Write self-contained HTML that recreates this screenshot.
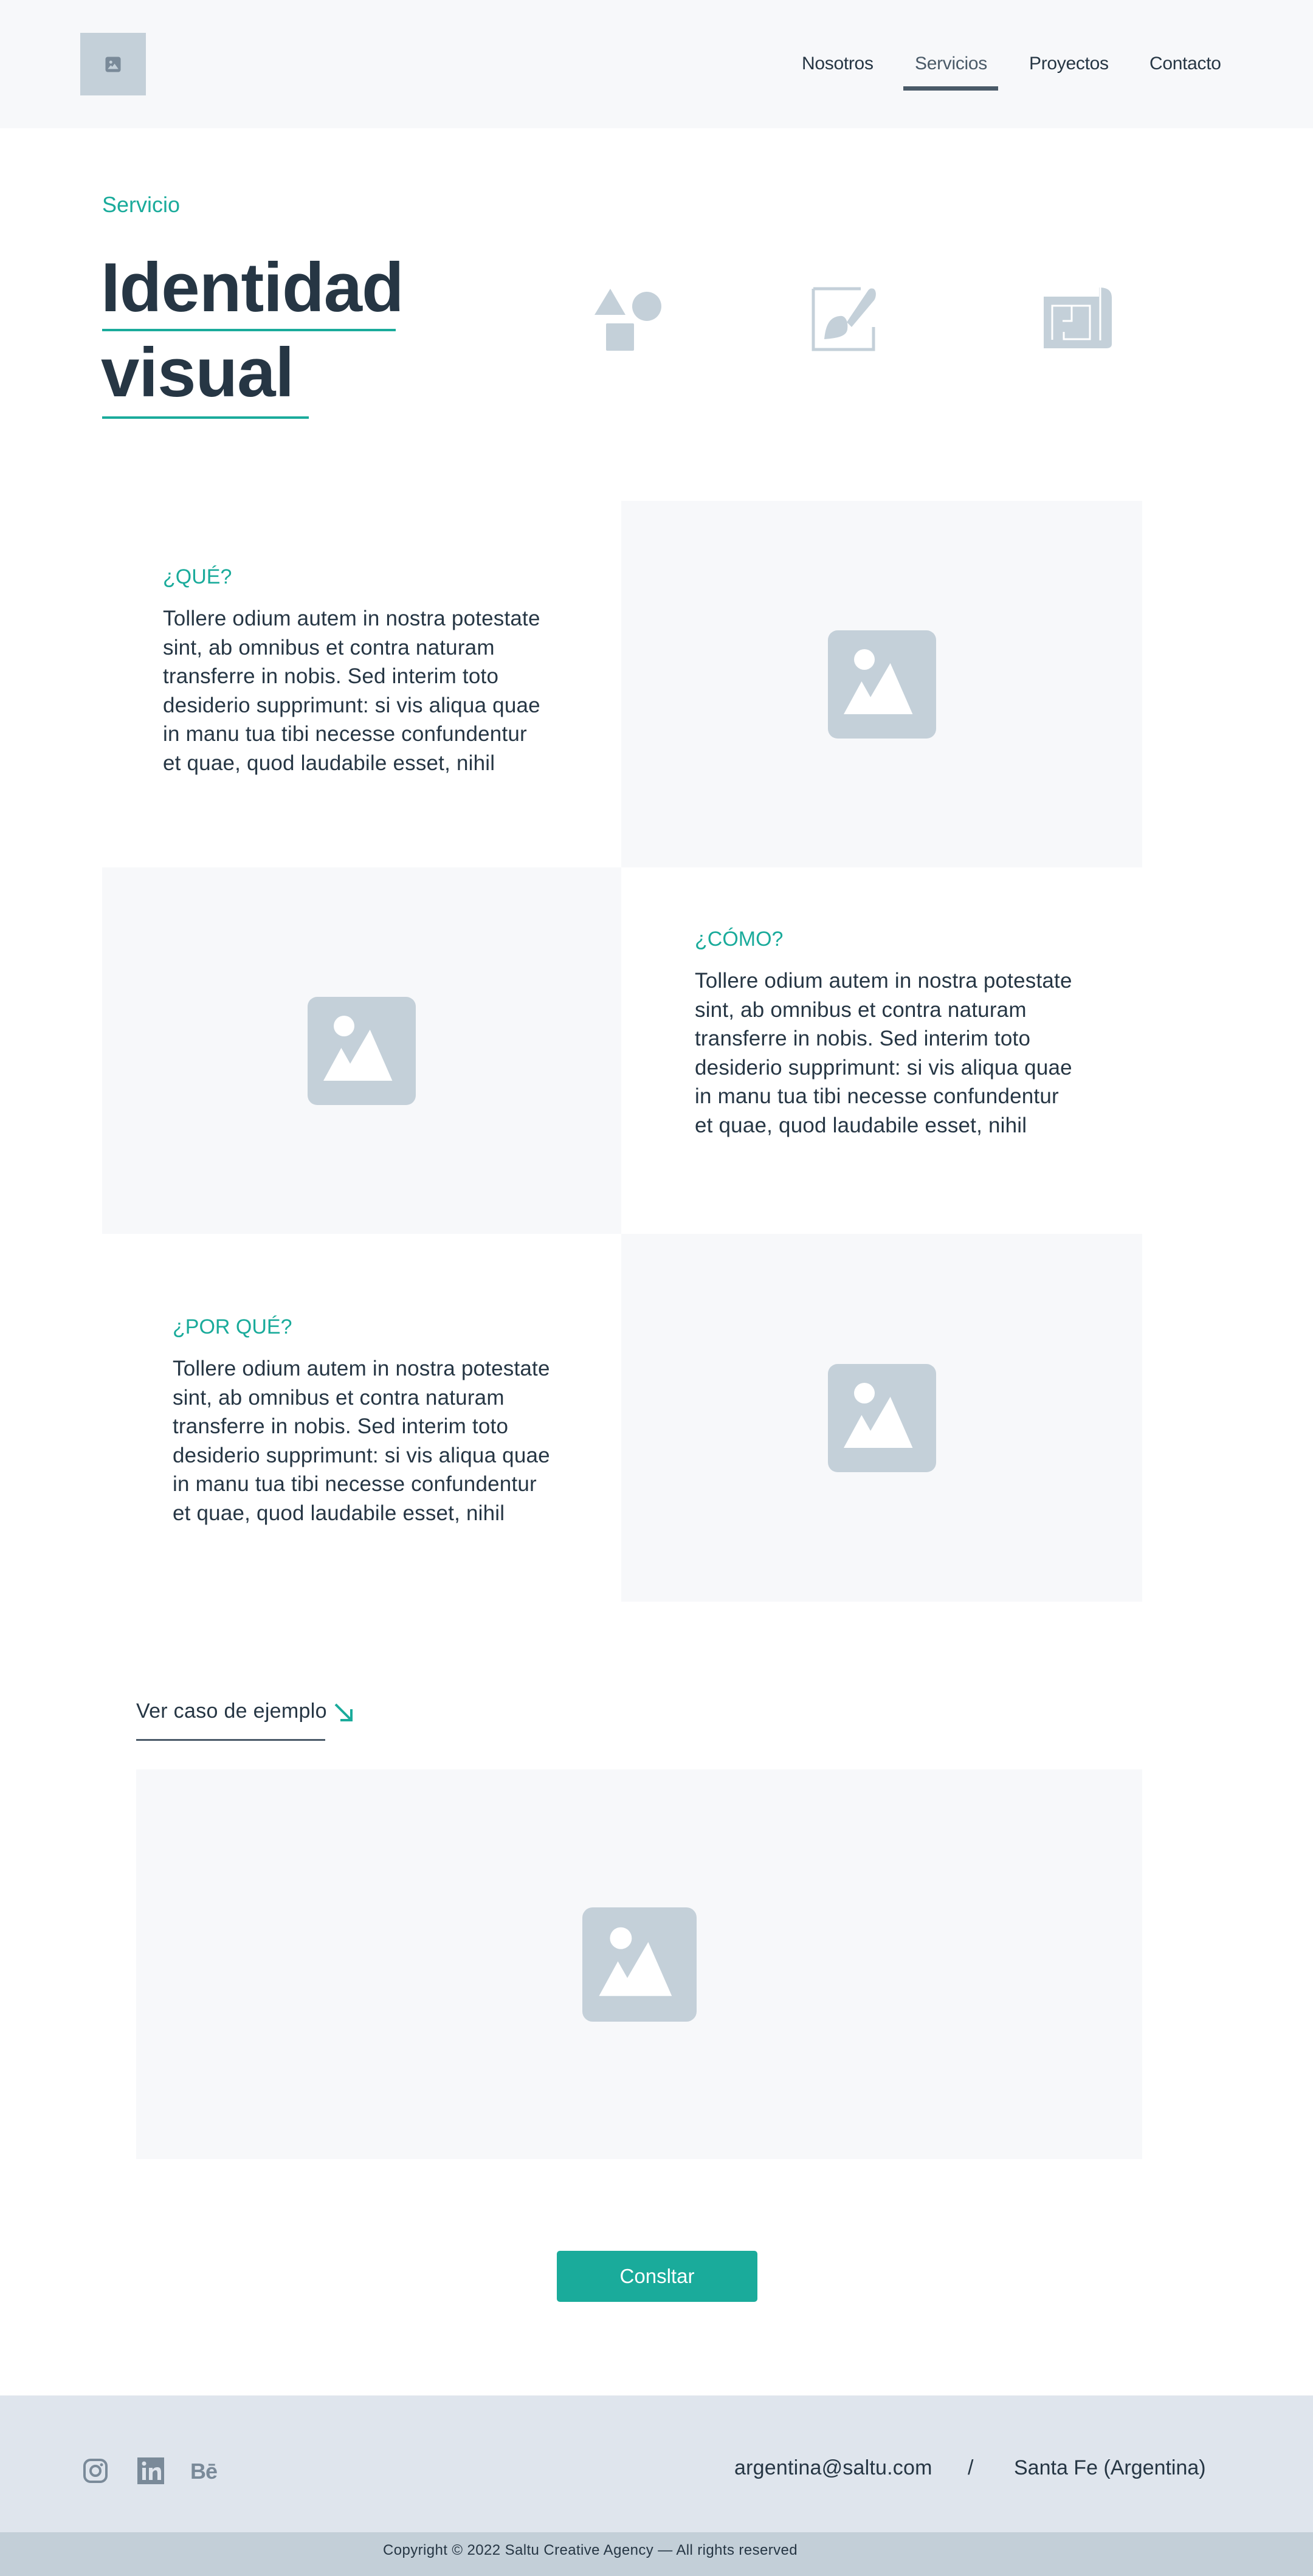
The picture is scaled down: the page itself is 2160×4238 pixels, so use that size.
<!DOCTYPE html>
<html><head><meta charset="utf-8"><style>
*{margin:0;padding:0;box-sizing:border-box}
body{width:2160px;height:4238px;position:relative;background:#fff;font-family:"Liberation Sans",sans-serif;color:#263644;overflow:hidden}
.a{position:absolute}
.nav{font-size:30px;top:88px;letter-spacing:-0.3px;color:#263644}
.ph{background:#f7f8fa;position:absolute;display:flex;align-items:center;justify-content:center}
.h{color:#1aab9b;font-size:34px;letter-spacing:0}
.p{font-size:35px;line-height:47.6px;letter-spacing:0.2px;white-space:nowrap;color:#263644}
</style></head><body>
<div class="a" style="left:0;top:0;width:2160px;height:211px;background:#f7f8fa"></div>
<div class="a" style="left:132px;top:54px;width:108px;height:103px;background:#c4d0d9;display:flex;align-items:center;justify-content:center">
<svg width="30" height="30" viewBox="0 0 24 24"><rect x="2" y="2" width="20" height="20" rx="3" fill="#7a8a99"/><circle cx="9" cy="9" r="2" fill="#c4d0d9"/><path d="M5 18l4-5 2 2 3-4 5 7z" fill="#c4d0d9"/></svg></div>
<div class="a nav" style="left:1319px">Nosotros</div>
<div class="a nav" style="left:1505px;color:#4a5a68">Servicios</div>
<div class="a nav" style="left:1693px">Proyectos</div>
<div class="a nav" style="left:1891px">Contacto</div>
<div class="a" style="left:1486px;top:142px;width:156px;height:7px;background:#4a5a68"></div>

<div class="a h" style="left:168px;top:316px;font-size:36px">Servicio</div>
<div class="a" style="left:166px;top:404px;font-size:114px;font-weight:bold;line-height:140px;letter-spacing:-1px;color:#263644">Identidad<br>visual</div>
<div class="a" style="left:168px;top:541px;width:483px;height:4px;background:#1aab9b"></div>
<div class="a" style="left:168px;top:685px;width:340px;height:4px;background:#1aab9b"></div>

<svg class="a" style="left:0;top:0" width="2160" height="700" viewBox="0 0 2160 700">
<path d="M1004 475L1029 518H978Z" fill="#c4d0d9"/>
<ellipse cx="1064" cy="504" rx="24" ry="24" fill="#c4d0d9"/>
<rect x="997" y="532" width="46" height="45" rx="2" fill="#c4d0d9"/>
<path d="M1338 475H1416M1338 475V575H1437V538" fill="none" stroke="#c4d0d9" stroke-width="5"/>
<path d="M1437 475C1442 478 1442 488 1438 494L1401 538 1393 530 1428 478C1431 474 1434 474 1437 475Z" fill="#c4d0d9"/>
<path d="M1381 520C1390 518 1396 528 1394 542 1392 553 1380 556 1356 558 1358 540 1362 522 1381 520Z" fill="#c4d0d9"/>
<path d="M1717 488H1808V473C1822 473 1829 478 1829 490V566C1829 571 1825 573 1820 573H1717Z" fill="#c4d0d9"/>
<path d="M1810 473V560" stroke="#fff" stroke-width="3"/>
<path d="M1731 559V503H1793V558H1750V546M1763 503V528H1748" fill="none" stroke="#fff" stroke-width="3"/>
</svg>

<div class="ph" style="left:1022px;top:824px;width:857px;height:603px"><svg width="178" height="178" viewBox="0 0 178 178"><rect width="178" height="178" rx="16" fill="#c4d0d9"/><circle cx="60" cy="48" r="17" fill="#fff"/><path d="M20 138L48 84 62 110 93 54 128 138z" fill="#fff" transform="translate(5,0) scale(1.05,1)"/></svg></div>
<div class="a h" style="left:268px;top:930px">¿QUÉ?</div>
<div class="a p" style="left:268px;top:994px">Tollere odium autem in nostra potestate<br>sint, ab omnibus et contra naturam<br>transferre in nobis. Sed interim toto<br>desiderio supprimunt: si vis aliqua quae<br>in manu tua tibi necesse confundentur<br>et quae, quod laudabile esset, nihil</div>

<div class="ph" style="left:168px;top:1427px;width:854px;height:603px"><svg width="178" height="178" viewBox="0 0 178 178"><rect width="178" height="178" rx="16" fill="#c4d0d9"/><circle cx="60" cy="48" r="17" fill="#fff"/><path d="M20 138L48 84 62 110 93 54 128 138z" fill="#fff" transform="translate(5,0) scale(1.05,1)"/></svg></div>
<div class="a h" style="left:1143px;top:1526px">¿CÓMO?</div>
<div class="a p" style="left:1143px;top:1590px">Tollere odium autem in nostra potestate<br>sint, ab omnibus et contra naturam<br>transferre in nobis. Sed interim toto<br>desiderio supprimunt: si vis aliqua quae<br>in manu tua tibi necesse confundentur<br>et quae, quod laudabile esset, nihil</div>

<div class="ph" style="left:1022px;top:2030px;width:857px;height:605px"><svg width="178" height="178" viewBox="0 0 178 178"><rect width="178" height="178" rx="16" fill="#c4d0d9"/><circle cx="60" cy="48" r="17" fill="#fff"/><path d="M20 138L48 84 62 110 93 54 128 138z" fill="#fff" transform="translate(5,0) scale(1.05,1)"/></svg></div>
<div class="a h" style="left:284px;top:2164px">¿POR QUÉ?</div>
<div class="a p" style="left:284px;top:2228px">Tollere odium autem in nostra potestate<br>sint, ab omnibus et contra naturam<br>transferre in nobis. Sed interim toto<br>desiderio supprimunt: si vis aliqua quae<br>in manu tua tibi necesse confundentur<br>et quae, quod laudabile esset, nihil</div>

<div class="a" style="left:224px;top:2796px;font-size:34px;letter-spacing:0.3px;color:#263644">Ver caso de ejemplo</div>
<svg class="a" style="left:548px;top:2800px" width="34" height="34" viewBox="0 0 34 34"><path d="M4 4L30 30M12 30H30V12" fill="none" stroke="#1aab9b" stroke-width="4"/></svg>
<div class="a" style="left:224px;top:2861px;width:311px;height:3px;background:#4a5a68"></div>

<div class="ph" style="left:224px;top:2911px;width:1655px;height:641px"><svg width="188" height="188" viewBox="0 0 178 178"><rect width="178" height="178" rx="16" fill="#c4d0d9"/><circle cx="60" cy="48" r="17" fill="#fff"/><path d="M20 138L48 84 62 110 93 54 128 138z" fill="#fff" transform="translate(5,0) scale(1.05,1)"/></svg></div>

<div class="a" style="left:916px;top:3703px;width:330px;height:84px;background:#1aab9b;border-radius:5px;color:#fff;font-size:33px;display:flex;align-items:center;justify-content:center">Consltar</div>

<div class="a" style="left:0;top:3941px;width:2160px;height:225px;background:#dfe5ed"></div>
<svg class="a" style="left:136px;top:4044px" width="42" height="42" viewBox="0 0 42 42"><rect x="3" y="3" width="36" height="36" rx="10" fill="none" stroke="#7a8a99" stroke-width="4"/><circle cx="21" cy="21" r="8" fill="none" stroke="#7a8a99" stroke-width="4"/><circle cx="31" cy="11" r="2.5" fill="#7a8a99"/></svg>
<svg class="a" style="left:226px;top:4043px" width="44" height="44" viewBox="0 0 44 44"><rect width="44" height="44" fill="#7a8a99"/><rect x="8" y="17" width="6" height="20" fill="#dfe5ed"/><circle cx="11" cy="10" r="3.5" fill="#dfe5ed"/><path d="M19 17h6v3c2-3 5-4 8-4 5 0 6 4 6 8v13h-6V26c0-3-1-5-3-5s-5 2-5 5v11h-6z" fill="#dfe5ed"/></svg>
<div class="a" style="left:313px;top:4045px;font-size:36px;font-weight:bold;color:#7a8a99;letter-spacing:-1px">Bē</div>
<div class="a" style="left:1208px;top:4041px;font-size:34px;letter-spacing:0.2px;color:#263644">argentina@saltu.com</div>
<div class="a" style="left:1592px;top:4041px;font-size:34px;color:#263644">/</div>
<div class="a" style="left:1668px;top:4041px;font-size:34px;letter-spacing:0;color:#263644">Santa Fe (Argentina)</div>
<div class="a" style="left:0;top:4166px;width:2160px;height:72px;background:#c3cfd8"></div>
<div class="a" style="left:630px;top:4182px;font-size:24px;letter-spacing:0.4px;color:#263644">Copyright © 2022 Saltu Creative Agency — All rights reserved</div>
</body></html>
